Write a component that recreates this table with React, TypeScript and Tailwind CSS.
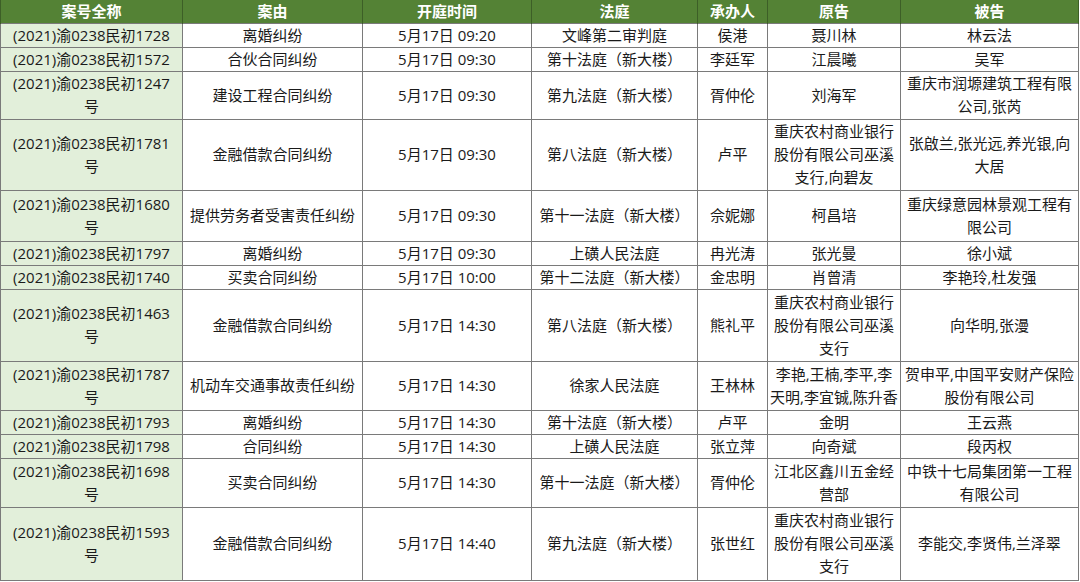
import React from 'react';

type Row = {
  h: number;
  cells: string[][];
};

const headers = ['案号全称', '案由', '开庭时间', '法庭', '承办人', '原告', '被告'];
const widths = [182, 180, 169, 166, 70, 133, 178];

const rows: Row[] = [
  { h: 24, cells: [['(2021)渝0238民初1728'], ['离婚纠纷'], ['5月17日 09:20'], ['文峰第二审判庭'], ['侯港'], ['聂川林'], ['林云法']] },
  { h: 24, cells: [['(2021)渝0238民初1572'], ['合伙合同纠纷'], ['5月17日 09:30'], ['第十法庭（新大楼）'], ['李廷军'], ['江晨曦'], ['吴军']] },
  {
    h: 48,
    cells: [
      ['(2021)渝0238民初1247', '号'],
      ['建设工程合同纠纷'],
      ['5月17日 09:30'],
      ['第九法庭（新大楼）'],
      ['胥仲伦'],
      ['刘海军'],
      ['重庆市润塬建筑工程有限', '公司,张芮'],
    ],
  },
  {
    h: 71,
    cells: [
      ['(2021)渝0238民初1781', '号'],
      ['金融借款合同纠纷'],
      ['5月17日 09:30'],
      ['第八法庭（新大楼）'],
      ['卢平'],
      ['重庆农村商业银行', '股份有限公司巫溪', '支行,向碧友'],
      ['张啟兰,张光远,养光银,向', '大居'],
    ],
  },
  {
    h: 51,
    cells: [
      ['(2021)渝0238民初1680', '号'],
      ['提供劳务者受害责任纠纷'],
      ['5月17日 09:30'],
      ['第十一法庭（新大楼）'],
      ['佘妮娜'],
      ['柯昌培'],
      ['重庆绿意园林景观工程有', '限公司'],
    ],
  },
  { h: 24, cells: [['(2021)渝0238民初1797'], ['离婚纠纷'], ['5月17日 09:30'], ['上磺人民法庭'], ['冉光涛'], ['张光曼'], ['徐小斌']] },
  { h: 24, cells: [['(2021)渝0238民初1740'], ['买卖合同纠纷'], ['5月17日 10:00'], ['第十二法庭（新大楼）'], ['金忠明'], ['肖曾清'], ['李艳玲,杜发强']] },
  {
    h: 72,
    cells: [
      ['(2021)渝0238民初1463', '号'],
      ['金融借款合同纠纷'],
      ['5月17日 14:30'],
      ['第八法庭（新大楼）'],
      ['熊礼平'],
      ['重庆农村商业银行', '股份有限公司巫溪', '支行'],
      ['向华明,张漫'],
    ],
  },
  {
    h: 49,
    cells: [
      ['(2021)渝0238民初1787', '号'],
      ['机动车交通事故责任纠纷'],
      ['5月17日 14:30'],
      ['徐家人民法庭'],
      ['王林林'],
      ['李艳,王楠,李平,李', '天明,李宜铖,陈升香'],
      ['贺申平,中国平安财产保险', '股份有限公司'],
    ],
  },
  { h: 24, cells: [['(2021)渝0238民初1793'], ['离婚纠纷'], ['5月17日 14:30'], ['第十法庭（新大楼）'], ['卢平'], ['金明'], ['王云燕']] },
  { h: 23, cells: [['(2021)渝0238民初1798'], ['合同纠纷'], ['5月17日 14:30'], ['上磺人民法庭'], ['张立萍'], ['向奇斌'], ['段丙权']] },
  {
    h: 49,
    cells: [
      ['(2021)渝0238民初1698', '号'],
      ['买卖合同纠纷'],
      ['5月17日 14:30'],
      ['第十一法庭（新大楼）'],
      ['胥仲伦'],
      ['江北区鑫川五金经', '营部'],
      ['中铁十七局集团第一工程', '有限公司'],
    ],
  },
  {
    h: 73,
    cells: [
      ['(2021)渝0238民初1593', '号'],
      ['金融借款合同纠纷'],
      ['5月17日 14:40'],
      ['第九法庭（新大楼）'],
      ['张世红'],
      ['重庆农村商业银行', '股份有限公司巫溪', '支行'],
      ['李能交,李贤伟,兰泽翠'],
    ],
  },
];

export default function App() {
  return (
    <div
      className="h-[582px] w-[1080px] overflow-hidden bg-white text-[15px] text-[#1a1a1a]"
      style={{ fontFamily: '"Open Sans", "Noto Sans CJK SC", sans-serif' }}
    >
      <table className="w-[1078px] table-fixed border-collapse">
        <colgroup>
          {widths.map((w, i) => (
            <col key={i} style={{ width: w }} />
          ))}
        </colgroup>
        <thead>
          <tr className="h-[23px] bg-[#548235]">
            {headers.map((t) => (
              <th
                key={t}
                className="border-x border-[#3d5f27] p-0 text-center font-bold leading-[22px] text-white"
              >
                {t}
              </th>
            ))}
          </tr>
        </thead>
        <tbody>
          {rows.map((row, ri) => (
            <tr key={ri} style={{ height: row.h }}>
              {row.cells.map((lines, ci) => (
                <td
                  key={ci}
                  className={`border border-[#7a7a7a] p-0 text-center align-middle leading-[23px] ${
                    ci === 0 ? 'bg-[#e2efda]' : 'bg-white'
                  }`}
                >
                  {lines.map((l, li) => (
                    <div key={li} className="whitespace-nowrap">
                      {l}
                    </div>
                  ))}
                </td>
              ))}
            </tr>
          ))}
        </tbody>
      </table>
    </div>
  );
}
